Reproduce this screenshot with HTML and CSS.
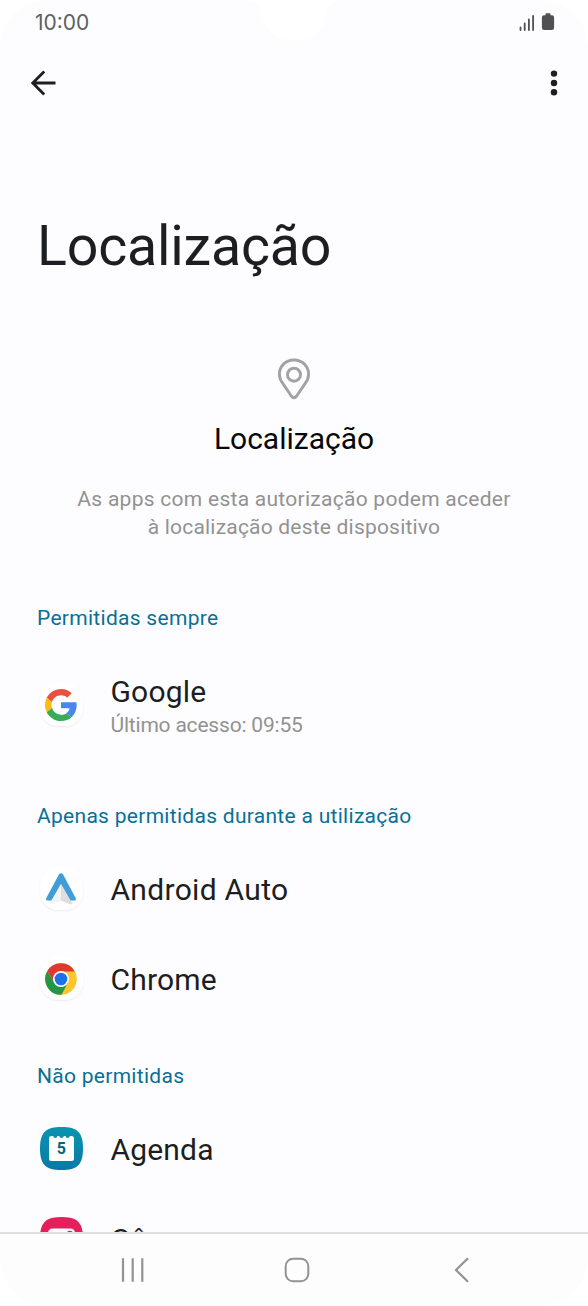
FILE: index.html
```html
<!DOCTYPE html>
<html lang="pt">
<head>
<meta charset="utf-8">
<title>Localização</title>
<link rel="stylesheet" href="styles.css">
</head>
<body>
<div class="phone">
  <svg class="camera-notch" width="96" height="42" viewBox="0 0 96 42" fill="#fff"><path d="M0 0C9 1 14 5 15.500 13C18 30 31 40.500 48 40.500S78 30 80.500 13C82 5 87 1 96 0Z"/></svg>
  <header class="status">
    <span class="clock">10:00</span>
    <svg class="status-icons" width="36" height="20" viewBox="0 0 36 20">
      <g stroke="#505050" stroke-width="1.8" stroke-linecap="round"><path d="M1.500 15.500v2.600M5.700 11.500v6.600M9.900 7.500v10.600M14.100 4v14.100"/></g>
      <path d="M26.500 2.300q0-1 1-1h3q1 0 1 1v1h1.500q2.100 0 2.100 2.200v10.200q0 2.200-2.200 2.200h-7.800q-2.200 0-2.200-2.200V5.500q0-2.200 2.100-2.200h1.500z" fill="#505050"/>
    </svg>
  </header>
  <nav class="appbar">
    <svg width="26" height="26" viewBox="0 0 26 26" fill="none" stroke="#1d1e21" stroke-width="2.800"><path d="M1.600 13H24.500M13.200 1.400L1.800 13l11.400 11.600"/></svg>
    <svg width="8" height="28" viewBox="0 0 8 28" fill="#1d1e21"><circle cx="4" cy="4.600" r="3.200"/><circle cx="4" cy="14" r="3.200"/><circle cx="4" cy="23.300" r="3.200"/></svg>
  </nav>
  <h1 class="title">Localização</h1>
  <section class="hero">
    <svg width="34" height="42" viewBox="0 0 34 42" fill="none" stroke="#a2a2a2" stroke-width="2.900"><path d="M17 2C8.500 2 2.400 8.300 2.400 16.200C2.400 20.300 4 23.200 6.300 26.200L14.300 38Q17 41.400 19.700 38L27.700 26.200C30 23.200 31.600 20.300 31.600 16.200C31.600 8.300 25.500 2 17 2Z"/><circle cx="17" cy="16.700" r="6.500"/></svg>
    <h2 class="hero-title">Localização</h2>
    <p class="hero-text"><span class="line-one">As apps com esta autorização podem aceder</span><br><span class="line-two">à localização deste dispositivo</span></p>
  </section>
  <main class="list">
    <h3 class="section">Permitidas sempre</h3>
    <div class="row row-tall">
      <span class="icon icon-white">
        <svg width="32" height="32" viewBox="0 0 48 48"><path fill="#ea4f41" d="M24 9.500c3.540 0 6.710 1.220 9.210 3.600l6.850-6.850C35.900 2.380 30.470 0 24 0 14.620 0 6.510 5.380 2.560 13.220l7.980 6.190C12.430 13.720 17.740 9.500 24 9.500z"/><path fill="#4a86ef" d="M47.500 24.550c0-1.570-.150-3.090-.380-4.550H24v9.020h12.940c-.580 2.960-2.260 5.480-4.780 7.180l7.730 6c4.510-4.180 7.610-10.360 7.610-17.650z"/><path fill="#fbbd14" d="M10.530 28.590c-.480-1.450-.760-2.990-.760-4.590s.270-3.140.760-4.590l-7.980-6.190C.920 16.460 0 20.120 0 24c0 3.880.920 7.540 2.560 10.780l7.970-6.190z"/><path fill="#3baa58" d="M24 48c6.480 0 11.930-2.130 15.890-5.810l-7.730-6c-2.150 1.450-4.920 2.300-8.160 2.300-6.260 0-11.570-4.220-13.470-9.910l-7.980 6.190C6.510 42.620 14.620 48 24 48z"/></svg>
      </span>
      <div class="details"><div class="name">Google</div><div class="sub">Último acesso: 09:55</div></div>
    </div>
    <h3 class="section">Apenas permitidas durante a utilização</h3>
    <div class="row">
      <span class="icon icon-white">
        <svg width="32" height="32" viewBox="0 0 32 32"><path d="M16 9L27.500 30.500Q27 31.800 24.500 30.700L16 27.800L7.500 30.700Q5 31.800 4.500 30.500Z" fill="#f3f3f3"/><path d="M16 9L27.500 30.500Q27 31.800 24.500 30.700L16 27.800Z" fill="#dedede"/><path d="M13.900 1.500Q16-1.200 18.100 1.500L30.800 25.300Q31.400 27.600 29.500 27.600H25.600L16 10.800L6.400 27.600H2.500Q.6 27.600 1.200 25.300Z" fill="#409dd7"/></svg>
      </span>
      <div class="name name-wide">Android Auto</div>
    </div>
    <div class="row">
      <span class="icon icon-white">
        <svg width="32" height="32" viewBox="0 0 32 32"><circle cx="16" cy="16" r="15.800" fill="#fcc52c"/><path d="M16 16L23 19.500L16.500 31.800A15.800 15.800 0 0 1 2.300 8.100L9.500 20Z" fill="#249547"/><path d="M2.300 8.100A15.800 15.800 0 0 1 29.700 8.500H16L9.500 19.800Z" fill="#dc3a2f"/><circle cx="16" cy="16" r="8" fill="#fff"/><circle cx="16" cy="16" r="6.300" fill="#1b72e8"/></svg>
      </span>
      <div class="name">Chrome</div>
    </div>
    <h3 class="section">Não permitidas</h3>
    <div class="row">
      <span class="icon">
        <svg width="43" height="43" viewBox="0 0 43 43"><defs><linearGradient id="teal" x2="0" y2="1"><stop stop-color="#0994b1"/><stop offset="1" stop-color="#087aa4"/></linearGradient></defs><path d="M21.500 0C37.500 0 43 5.500 43 21.500S37.500 43 21.500 43 0 37.500 0 21.500 5.500 0 21.500 0Z" fill="url(#teal)"/><path d="M11.500 9H13.200Q13.600 11 15.300 11T17.500 9H19.200Q19.600 11 21.500 11T23.800 9H25.500Q25.900 11 27.700 11T29.900 9H31.500Q34 9 34 11.500V31.500Q34 34 31.500 34H11.500Q9 34 9 31.500V11.500Q9 9 11.500 9Z" fill="#fff"/><text class="day" x="21.300" y="27.300" text-anchor="middle">5</text></svg>
      </span>
      <div class="name">Agenda</div>
    </div>
    <div class="row">
      <span class="icon">
        <svg width="43" height="43" viewBox="0 0 43 43"><path d="M21.500 0C37.500 0 43 5.500 43 21.500S37.500 43 21.500 43 0 37.500 0 21.500 5.500 0 21.500 0Z" fill="#e51f5b"/><rect x="8" y="11.500" width="27" height="21" rx="4.500" fill="#fff"/><ellipse cx="29.800" cy="15.200" rx="2.500" ry="1.500" fill="#e51f5b"/></svg>
      </span>
      <div class="name">Câmara</div>
    </div>
  </main>
  <footer class="navbar">
    <svg width="24" height="26" viewBox="0 0 24 26" stroke="#929292" stroke-width="2.200"><path d="M2 1.200v23.500M11.700 1.200v23.500M21.300 1.200v23.500"/></svg>
    <svg width="26" height="26" viewBox="0 0 26 26" fill="none" stroke="#929292" stroke-width="2"><rect x="1.700" y="1.700" width="22.600" height="22.600" rx="7.500"/></svg>
    <svg width="16" height="26" viewBox="0 0 16 26" fill="none" stroke="#929292" stroke-width="2.200"><path d="M14 1.200L2 13l12 11.800"/></svg>
  </footer>
</div>
</body>
</html>
```
FILE: styles.css
```css
* { box-sizing: border-box; }
body { margin: 0; background: #fff; }
h1, h2, h3, p { margin: 0; font-weight: 400; }
svg { display: block; flex: none; }

.phone {
  position: relative;
  display: flex;
  flex-direction: column;
  width: 588px;
  height: 1306px;
  overflow: hidden;
  border-radius: 48px;
  background: #fdfdff;
  font-family: Roboto, sans-serif;
  color: #1d1e21;
  white-space: nowrap;
}
.camera-notch {
  position: absolute;
  top: 0;
  left: 246px;
}

.status {
  display: flex;
  justify-content: space-between;
  align-items: center;
  height: 44px;
  padding: 0 33px 0 35px;
}
.clock { padding-top: 1px; font: 21px/28px Inter, sans-serif; color: #606060; }
.appbar {
  display: flex;
  justify-content: space-between;
  align-items: center;
  height: 78px;
  padding: 0 30px 0 31px;
}
.title {
  height: 156px;
  padding: 93px 0 0 37px;
  font-size: 55.5px;
  line-height: 64px;
  letter-spacing: -.2px;
}
.hero {
  display: flex;
  flex-direction: column;
  align-items: center;
  height: 288px;
  padding-top: 80px;
  text-align: center;
}
.hero-title { margin-top: 21px; font-size: 30px; line-height: 36px; color: #08080a; }
.hero-text { margin-top: 28px; font-size: 21px; line-height: 28px; color: #929292; }
.line-one { letter-spacing: .27px; }
.line-two { letter-spacing: .2px; }

.list { flex: 1; min-height: 0; overflow: hidden; }
.section {
  height: 80px;
  padding: 38px 0 0 37px;
  font-size: 21px;
  line-height: 28px;
  letter-spacing: .29px;
  color: #087096;
}
.row {
  display: flex;
  align-items: center;
  gap: 28px;
  height: 90px;
  padding-left: 39.5px;
}
.row-tall { height: 118px; }
.icon {
  display: grid;
  place-items: center;
  flex: none;
  width: 43px;
  height: 43px;
  margin-top: -1px;
}
.icon-white { border-radius: 18px; background: #fff; box-shadow: 0 1px 2px rgba(0, 0, 0, .07); }
.day { font: 700 16px Roboto, sans-serif; fill: #08627f; }
.name { padding-top: 2px; font-size: 30px; line-height: 36px; letter-spacing: .18px; }
.name-wide { letter-spacing: .3px; }
.details { padding-top: 1px; }
.sub { font-size: 21px; line-height: 28px; margin-top: 1px; letter-spacing: -.2px; color: #929292; }

.navbar {
  display: flex;
  align-items: center;
  flex: none;
  height: 74px;
  padding-left: 121px;
  border-top: 2px solid #e0e0e2;
  background: #fdfdfd;
}
.navbar svg:nth-child(2) { margin-left: 139px; }
.navbar svg:nth-child(3) { margin-left: 144px; }
```
